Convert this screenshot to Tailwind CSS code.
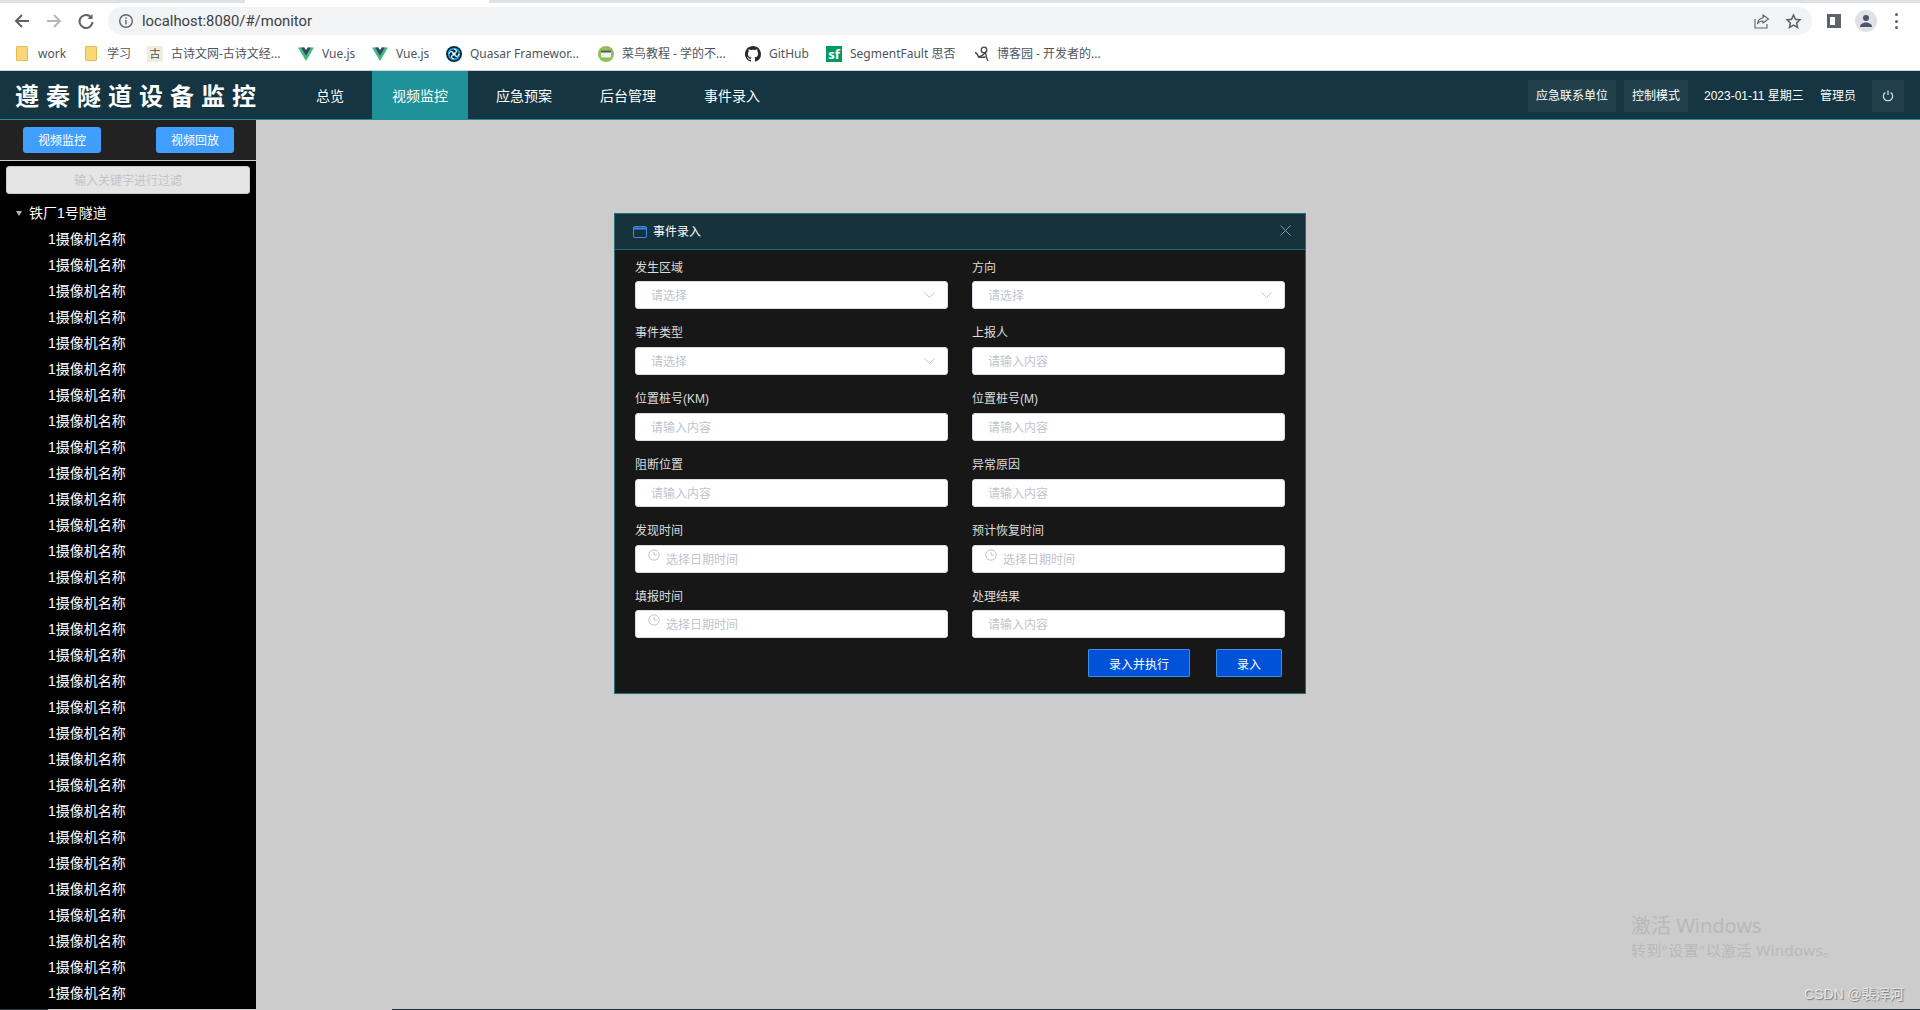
<!DOCTYPE html>
<html lang="en">
<head>
    <meta charset="UTF-8">
    <title>遵秦隧道设备监控</title>
    <script src="https://cdn.jsdelivr.net/npm/@tailwindcss/browser@4"></script>
</head>
<body class="bg-[#cccccc] overflow-hidden font-['Liberation_Sans','Noto_Sans_CJK_SC',sans-serif]">
<div class="relative w-[1920px] h-[1010px] flex flex-col overflow-hidden">

    <!-- Browser chrome -->
    <div class="h-[71px] shrink-0 bg-white border-b border-[#d0d3d6] flex flex-col">
        <div class="h-[3px] flex">
            <div class="w-[245px] bg-[#dee1e6]"></div>
            <div class="w-[244px] bg-white"></div>
            <div class="flex-1 bg-[#dee1e6]"></div>
        </div>
        <div class="h-[32px] pt-[4px] flex items-center">
            <div class="w-[108px] flex items-center shrink-0 pl-[13px] gap-[14px]">
                <svg class="w-[18px] h-[18px]" viewBox="0 0 18 18" fill="none" stroke="#5f6368" stroke-width="2"><path d="M16 9H3M9 3 3 9l6 6"/></svg>
                <svg class="w-[18px] h-[18px]" viewBox="0 0 18 18" fill="none" stroke="#b4b7ba" stroke-width="2"><path d="M2 9h13M9 3l6 6-6 6"/></svg>
                <svg class="w-[18px] h-[18px]" viewBox="0 0 18 18" fill="none" stroke="#5f6368" stroke-width="2"><path d="M14.5 6A6.5 6.5 0 1 0 15.5 10"/><path d="M15.5 2v5h-5" fill="#5f6368" stroke="none"/></svg>
            </div>
            <div class="w-[1704px] h-[28px] rounded-full bg-[#f1f3f4] flex items-center pl-[10px] pr-[10px]">
                <svg class="w-[16px] h-[16px] shrink-0" viewBox="0 0 16 16" fill="none" stroke="#5f6368" stroke-width="1.4"><circle cx="8" cy="8" r="6.3"/><path d="M8 7v4.5M8 4.3v1.5"/></svg>
                <span class="ml-[8px] text-[14.8px] text-[#3c4043] font-['Roboto',sans-serif]">localhost:8080/#/monitor</span>
                <div class="ml-auto flex items-center gap-[15px]">
                    <svg class="w-[16px] h-[16px]" viewBox="0 0 16 16" fill="none" stroke="#5f6368" stroke-width="1.1"><path d="M1 6v9h12v-4M9 2l5.500 4-5.500 4V8C6 8 4.500 9 3.500 11 3.500 7.500 6 5 9 5z"/></svg>
                    <svg class="w-[17px] h-[17px]" viewBox="0 0 24 24" fill="none" stroke="#5f6368" stroke-width="2.200"><path d="m12 3 2.800 6 6.200.7-4.600 4.300 1.300 6.400L12 17.200 6.300 20.400 7.600 14 3 9.700 9.200 9z"/></svg>
                </div>
            </div>
            <div class="flex items-center ml-[15px]">
                <div class="w-[14px] h-[14px] border-[3px] border-[#5f6368] flex justify-end bg-white"><div class="w-[3px] bg-[#5f6368]"></div></div>
                <div class="ml-[14px] w-[22px] h-[22px] rounded-full bg-[#dfe1e6] flex items-center justify-center">
                    <svg class="w-[14px] h-[14px]" viewBox="0 0 14 14" fill="#4a5568"><circle cx="7" cy="4" r="3"/><path d="M1 13c0-3 3-4.500 6-4.500s6 1.500 6 4.500z"/></svg>
                </div>
                <div class="ml-[18px] flex flex-col gap-[3.500px]">
                    <div class="w-[3px] h-[3px] rounded-full bg-[#5f6368]"></div>
                    <div class="w-[3px] h-[3px] rounded-full bg-[#5f6368]"></div>
                    <div class="w-[3px] h-[3px] rounded-full bg-[#5f6368]"></div>
                </div>
            </div>
        </div>
        <!-- Bookmarks -->
        <div class="flex-1 flex items-center pl-[16px] pt-[2px] text-[12px] text-[#50545a] whitespace-nowrap font-['Noto_Sans','Noto_Sans_CJK_SC',sans-serif]">
            <div class="w-[69px] flex items-center gap-[10px]"><div class="w-[12px] h-[15px] bg-[#f8d775] border border-[#e6bc52] rounded-[1px]"></div>work</div>
            <div class="w-[62px] flex items-center gap-[10px]"><div class="w-[12px] h-[15px] bg-[#f8d775] border border-[#e6bc52] rounded-[1px]"></div>学习</div>
            <div class="w-[151px] flex items-center gap-[8px]"><div class="w-[16px] h-[16px] bg-[#eeeedd] text-[11px] leading-[16px] text-center text-[#555]">古</div>古诗文网-古诗文经...</div>
            <div class="w-[74px] flex items-center gap-[8px]">
                <svg class="w-[16px] h-[16px]" viewBox="0 0 16 16"><path d="M0 1.500h6.300L8 4.300 9.700 1.500H16L8 15z" fill="#41b883"/><path d="M3.200 1.500h3.100L8 4.300 9.700 1.500h3.100L8 9.800z" fill="#35495e"/></svg>Vue.js</div>
            <div class="w-[74px] flex items-center gap-[8px]">
                <svg class="w-[16px] h-[16px]" viewBox="0 0 16 16"><path d="M0 1.500h6.300L8 4.300 9.700 1.500H16L8 15z" fill="#41b883"/><path d="M3.200 1.500h3.100L8 4.300 9.700 1.500h3.100L8 9.800z" fill="#35495e"/></svg>Vue.js</div>
            <div class="w-[152px] flex items-center gap-[8px]">
                <svg class="w-[16px] h-[16px]" viewBox="0 0 16 16"><circle cx="8" cy="8" r="8" fill="#06283d"/><circle cx="8" cy="8" r="6.200" fill="#0ea5e9"/><circle cx="8" cy="8" r="4.400" fill="#06283d"/><circle cx="8" cy="8" r="1.800" fill="#fff"/><path d="M8 3c2.500.5 3 2.500 1.500 4M13 8c-.5 2.500-2.500 3-4 1.500M8 13c-2.500-.5-3-2.500-1.500-4M3 8c.5-2.500 2.500-3 4-1.500" fill="none" stroke="#fff" stroke-width="1.200"/></svg>Quasar Framewor...</div>
            <div class="w-[147px] flex items-center gap-[8px]">
                <svg class="w-[16px] h-[16px]" viewBox="0 0 16 16"><circle cx="8" cy="8" r="8" fill="#8cc152"/><rect x="3" y="4.500" width="10" height="7" rx="1" fill="#f2f2f2"/><rect x="3" y="4.500" width="10" height="2" fill="#555"/></svg>菜鸟教程 - 学的不...</div>
            <div class="w-[81px] flex items-center gap-[8px]">
                <svg class="w-[16px] h-[16px]" viewBox="0 0 16 16" fill="#24292f"><path d="M8 0C3.580 0 0 3.580 0 8c0 3.540 2.290 6.530 5.470 7.590.4.070.55-.17.55-.38 0-.19-.01-.82-.01-1.490-2.010.37-2.530-.49-2.690-.94-.09-.23-.48-.94-.82-1.130-.28-.15-.68-.52-.01-.53.63-.01 1.080.58 1.230.82.720 1.210 1.870.87 2.330.66.070-.52.280-.87.510-1.070-1.780-.2-3.640-.89-3.640-3.950 0-.87.310-1.590.82-2.150-.08-.2-.36-1.020.08-2.120 0 0 .67-.21 2.200.82.640-.18 1.320-.27 2-.27s1.360.09 2 .27c1.530-1.040 2.200-.82 2.200-.82.440 1.100.16 1.920.08 2.120.51.560.82 1.270.82 2.150 0 3.070-1.870 3.750-3.650 3.950.29.250.54.730.54 1.480 0 1.070-.01 1.930-.01 2.200 0 .21.150.46.550.38A8.010 8.010 0 0 0 16 8c0-4.420-3.580-8-8-8z"/></svg>GitHub</div>
            <div class="w-[148px] flex items-center gap-[8px]"><div class="w-[16px] h-[16px] bg-[#009a61] text-white text-[13px] font-bold leading-[16px] text-center">sf</div>SegmentFault 思否</div>
            <div class="flex items-center gap-[7px]">
                <svg class="w-[16px] h-[16px]" viewBox="0 0 16 16" fill="none" stroke="#444" stroke-width="1.300"><circle cx="10" cy="4" r="2.800"/><path d="M1 6.500c2 .5 3 3 3.500 4.500 2.500-.5 5-2 7-4.500.5 3 1 6 2.500 8.500M4.500 11c2 .5 4 .5 7 0"/></svg>博客园 - 开发者的...</div>
        </div>
    </div>

    <!-- App header -->
    <div class="h-[49px] shrink-0 bg-[#143541] border-b border-[#2c8c93] flex items-center text-white">
        <div class="w-[296px] shrink-0 pl-[15px] pt-[3px] text-[24px] font-bold tracking-[7px] whitespace-nowrap">遵秦隧道设备监控</div>
        <nav class="flex h-full text-[14px] gap-[8px]">
            <div class="px-[20px] pt-[3px] flex items-center">总览</div>
            <div class="px-[20px] pt-[3px] flex items-center bg-[#1f9199]">视频监控</div>
            <div class="px-[20px] pt-[3px] flex items-center">应急预案</div>
            <div class="px-[20px] pt-[3px] flex items-center">后台管理</div>
            <div class="px-[20px] pt-[3px] flex items-center">事件录入</div>
        </nav>
        <div class="ml-auto flex items-center text-[12px] mr-[16px] mt-[2px] whitespace-nowrap">
            <div class="w-[88px] h-[32px] bg-[#21404c] flex items-center justify-center">应急联系单位</div>
            <div class="ml-[8px] w-[64px] h-[32px] bg-[#21404c] flex items-center justify-center">控制模式</div>
            <div class="ml-[16px] w-[100px]">2023-01-11 星期三</div>
            <div class="ml-[16px] w-[36px]">管理员</div>
            <div class="ml-[16px] w-[32px] h-[32px] bg-[#21404c] flex items-center justify-center">
                <svg class="w-[12px] h-[12px]" viewBox="0 0 12 12" fill="none" stroke="#e8eef0" stroke-width="1.100"><path d="M3.300 2.500a4.600 4.600 0 1 0 5.400 0M6 .5v4.500"/></svg>
            </div>
        </div>
    </div>

    <div class="flex-1 flex min-h-0">
        <!-- Sidebar -->
        <aside class="w-[256px] shrink-0 bg-black flex flex-col overflow-hidden">
            <div class="h-[41px] shrink-0 bg-[#222222] border-b border-[#cccccc] flex items-start pt-[7px] pl-[23px] gap-[55px]">
                <button class="w-[78px] h-[26px] pt-[2px] rounded-[3px] bg-[#409eff] text-white text-[12px]">视频监控</button>
                <button class="w-[78px] h-[26px] pt-[2px] rounded-[3px] bg-[#409eff] text-white text-[12px]">视频回放</button>
            </div>
            <div class="mx-[6px] mt-[5px] h-[28px] pt-[2px] shrink-0 rounded-[3px] bg-[#e5e5e5] border border-[#c8c8c8] flex items-center justify-center text-[12px] text-[#c0c4cc]">输入关键字进行过滤</div>
            <div class="mt-[6px] flex items-center h-[26px] shrink-0 text-[14px] text-white pl-[16px]">
                <div class="w-0 h-0 border-x-[3.500px] border-x-transparent border-t-[5px] border-t-[#b0b4bc]"></div>
                <span class="ml-[7px]">铁厂1号隧道</span>
            </div>
            <div id="cameras" class="text-[14px] text-white"></div>
        </aside>

        <!-- Dialog -->
        <main class="flex-1 pl-[358px] pt-[93px]">
            <div class="w-[692px] h-[481px] bg-[#171717] border border-[#1f6f76] flex flex-col">
                <div class="h-[36px] shrink-0 bg-[#15323d] border-b border-[#1c6a70] flex items-center pl-[18px] pr-[14px] text-white text-[12px]">
                    <svg class="w-[14px] h-[12px]" viewBox="0 0 14 12" fill="none" stroke="#3e8cf0"><rect x=".5" y=".5" width="13" height="11" rx="1"/><path d="M.5 2.500h13" stroke-width="2"/></svg>
                    <span class="ml-[6px]">事件录入</span>
                    <svg class="ml-auto -mt-[2px] w-[11px] h-[11px]" viewBox="0 0 11 11" stroke="#7f98a0" stroke-width="1"><path d="M.5.5l10 10M10.500.5l-10 10"/></svg>
                </div>
                <div class="px-[20px] pt-[3px] grid grid-cols-2 gap-x-[24px] text-[12px] text-[#dddddd]">
                    <label class="block h-[66px]"><div class="h-[28px] leading-[30px]">发生区域</div>
                        <div class="h-[28px] pt-[2px] w-[313px] bg-white rounded-[3px] border border-[#dcdfe6] flex items-center pl-[15px] pr-[12px] text-[#c0c4cc]">请选择
                            <svg class="ml-auto -mt-[2px] w-[11px] h-[6px]" viewBox="0 0 11 6" fill="none" stroke="#c0c4cc"><path d="M.5.5l5 5 5-5"/></svg></div></label>
                    <label class="block h-[66px]"><div class="h-[28px] leading-[30px]">方向</div>
                        <div class="h-[28px] pt-[2px] w-[313px] bg-white rounded-[3px] border border-[#dcdfe6] flex items-center pl-[15px] pr-[12px] text-[#c0c4cc]">请选择
                            <svg class="ml-auto -mt-[2px] w-[11px] h-[6px]" viewBox="0 0 11 6" fill="none" stroke="#c0c4cc"><path d="M.5.5l5 5 5-5"/></svg></div></label>
                    <label class="block h-[66px]"><div class="h-[28px] leading-[28px]">事件类型</div>
                        <div class="h-[28px] pt-[2px] w-[313px] bg-white rounded-[3px] border border-[#dcdfe6] flex items-center pl-[15px] pr-[12px] text-[#c0c4cc]">请选择
                            <svg class="ml-auto -mt-[2px] w-[11px] h-[6px]" viewBox="0 0 11 6" fill="none" stroke="#c0c4cc"><path d="M.5.5l5 5 5-5"/></svg></div></label>
                    <label class="block h-[66px]"><div class="h-[28px] leading-[28px]">上报人</div>
                        <div class="h-[28px] pt-[2px] w-[313px] bg-white rounded-[3px] border border-[#dcdfe6] flex items-center pl-[15px] text-[#c0c4cc]">请输入内容</div></label>
                    <label class="block h-[66px]"><div class="h-[28px] leading-[28px]">位置桩号(KM)</div>
                        <div class="h-[28px] pt-[2px] w-[313px] bg-white rounded-[3px] border border-[#dcdfe6] flex items-center pl-[15px] text-[#c0c4cc]">请输入内容</div></label>
                    <label class="block h-[66px]"><div class="h-[28px] leading-[28px]">位置桩号(M)</div>
                        <div class="h-[28px] pt-[2px] w-[313px] bg-white rounded-[3px] border border-[#dcdfe6] flex items-center pl-[15px] text-[#c0c4cc]">请输入内容</div></label>
                    <label class="block h-[66px]"><div class="h-[28px] leading-[28px]">阻断位置</div>
                        <div class="h-[28px] pt-[2px] w-[313px] bg-white rounded-[3px] border border-[#dcdfe6] flex items-center pl-[15px] text-[#c0c4cc]">请输入内容</div></label>
                    <label class="block h-[66px]"><div class="h-[28px] leading-[28px]">异常原因</div>
                        <div class="h-[28px] pt-[2px] w-[313px] bg-white rounded-[3px] border border-[#dcdfe6] flex items-center pl-[15px] text-[#c0c4cc]">请输入内容</div></label>
                    <label class="block h-[65px]"><div class="h-[28px] leading-[28px]">发现时间</div>
                        <div class="h-[28px] pt-[2px] w-[313px] bg-white rounded-[3px] border border-[#dcdfe6] flex items-center pl-[12px] text-[#c0c4cc]">
                            <svg class="w-[12px] h-[12px] -mt-[11px]" viewBox="0 0 12 12" fill="none" stroke="#c0c4cc"><circle cx="6" cy="6" r="5.200"/><path d="M6 3v3h3"/></svg><span class="ml-[6px]">选择日期时间</span></div></label>
                    <label class="block h-[65px]"><div class="h-[28px] leading-[28px]">预计恢复时间</div>
                        <div class="h-[28px] pt-[2px] w-[313px] bg-white rounded-[3px] border border-[#dcdfe6] flex items-center pl-[12px] text-[#c0c4cc]">
                            <svg class="w-[12px] h-[12px] -mt-[11px]" viewBox="0 0 12 12" fill="none" stroke="#c0c4cc"><circle cx="6" cy="6" r="5.200"/><path d="M6 3v3h3"/></svg><span class="ml-[6px]">选择日期时间</span></div></label>
                    <label class="block h-[56px]"><div class="h-[28px] leading-[30px]">填报时间</div>
                        <div class="h-[28px] pt-[2px] w-[313px] bg-white rounded-[3px] border border-[#dcdfe6] flex items-center pl-[12px] text-[#c0c4cc]">
                            <svg class="w-[12px] h-[12px] -mt-[11px]" viewBox="0 0 12 12" fill="none" stroke="#c0c4cc"><circle cx="6" cy="6" r="5.200"/><path d="M6 3v3h3"/></svg><span class="ml-[6px]">选择日期时间</span></div></label>
                    <label class="block h-[56px]"><div class="h-[28px] leading-[30px]">处理结果</div>
                        <div class="h-[28px] pt-[2px] w-[313px] bg-white rounded-[3px] border border-[#dcdfe6] flex items-center pl-[15px] text-[#c0c4cc]">请输入内容</div></label>
                </div>
                <div class="mt-[11px] flex justify-end pr-[23px] gap-[26px] text-[12px] text-white">
                    <button class="w-[102px] h-[28px] pt-[3px] bg-[#0052d9] border border-[#3a8ee6] rounded-[1px]">录入并执行</button>
                    <button class="w-[66px] h-[28px] pt-[3px] bg-[#0052d9] border border-[#3a8ee6] rounded-[1px]">录入</button>
                </div>
            </div>
        </main>
    </div>

    <!-- Windows watermark and image credit, over the page -->
    <div class="absolute left-[1631px] top-[912px] text-[#b9b9b9] font-['Noto_Sans','Noto_Sans_CJK_SC',sans-serif]">
        <div class="text-[20px] leading-[28px]">激活 Windows</div>
        <div class="text-[15px] leading-[20px] tracking-[0.4px]">转到"设置"以激活 Windows。</div>
    </div>
    <div class="absolute left-[1804px] top-[984px] text-[14px] leading-[20px] text-[#e6e6e6] [text-shadow:1px_1px_1px_#777]">CSDN @裴浑河</div>
    <div class="absolute left-0 bottom-0 w-full h-[1px] flex">
        <div class="w-[48px] bg-[#2b3a40]"></div>
        <div class="w-[344px] bg-[#cccccc]"></div>
        <div class="flex-1 bg-[#1c2f3a]"></div>
    </div>
</div>

<script>
    // 30 camera rows under the tunnel
    const cameras = document.getElementById('cameras');
    for (let i = 0; i < 30; i++) {
        cameras.innerHTML += '<div class="h-[26px] leading-[26px] pl-[48px]">1摄像机名称</div>';
    }
</script>
</body>
</html>
